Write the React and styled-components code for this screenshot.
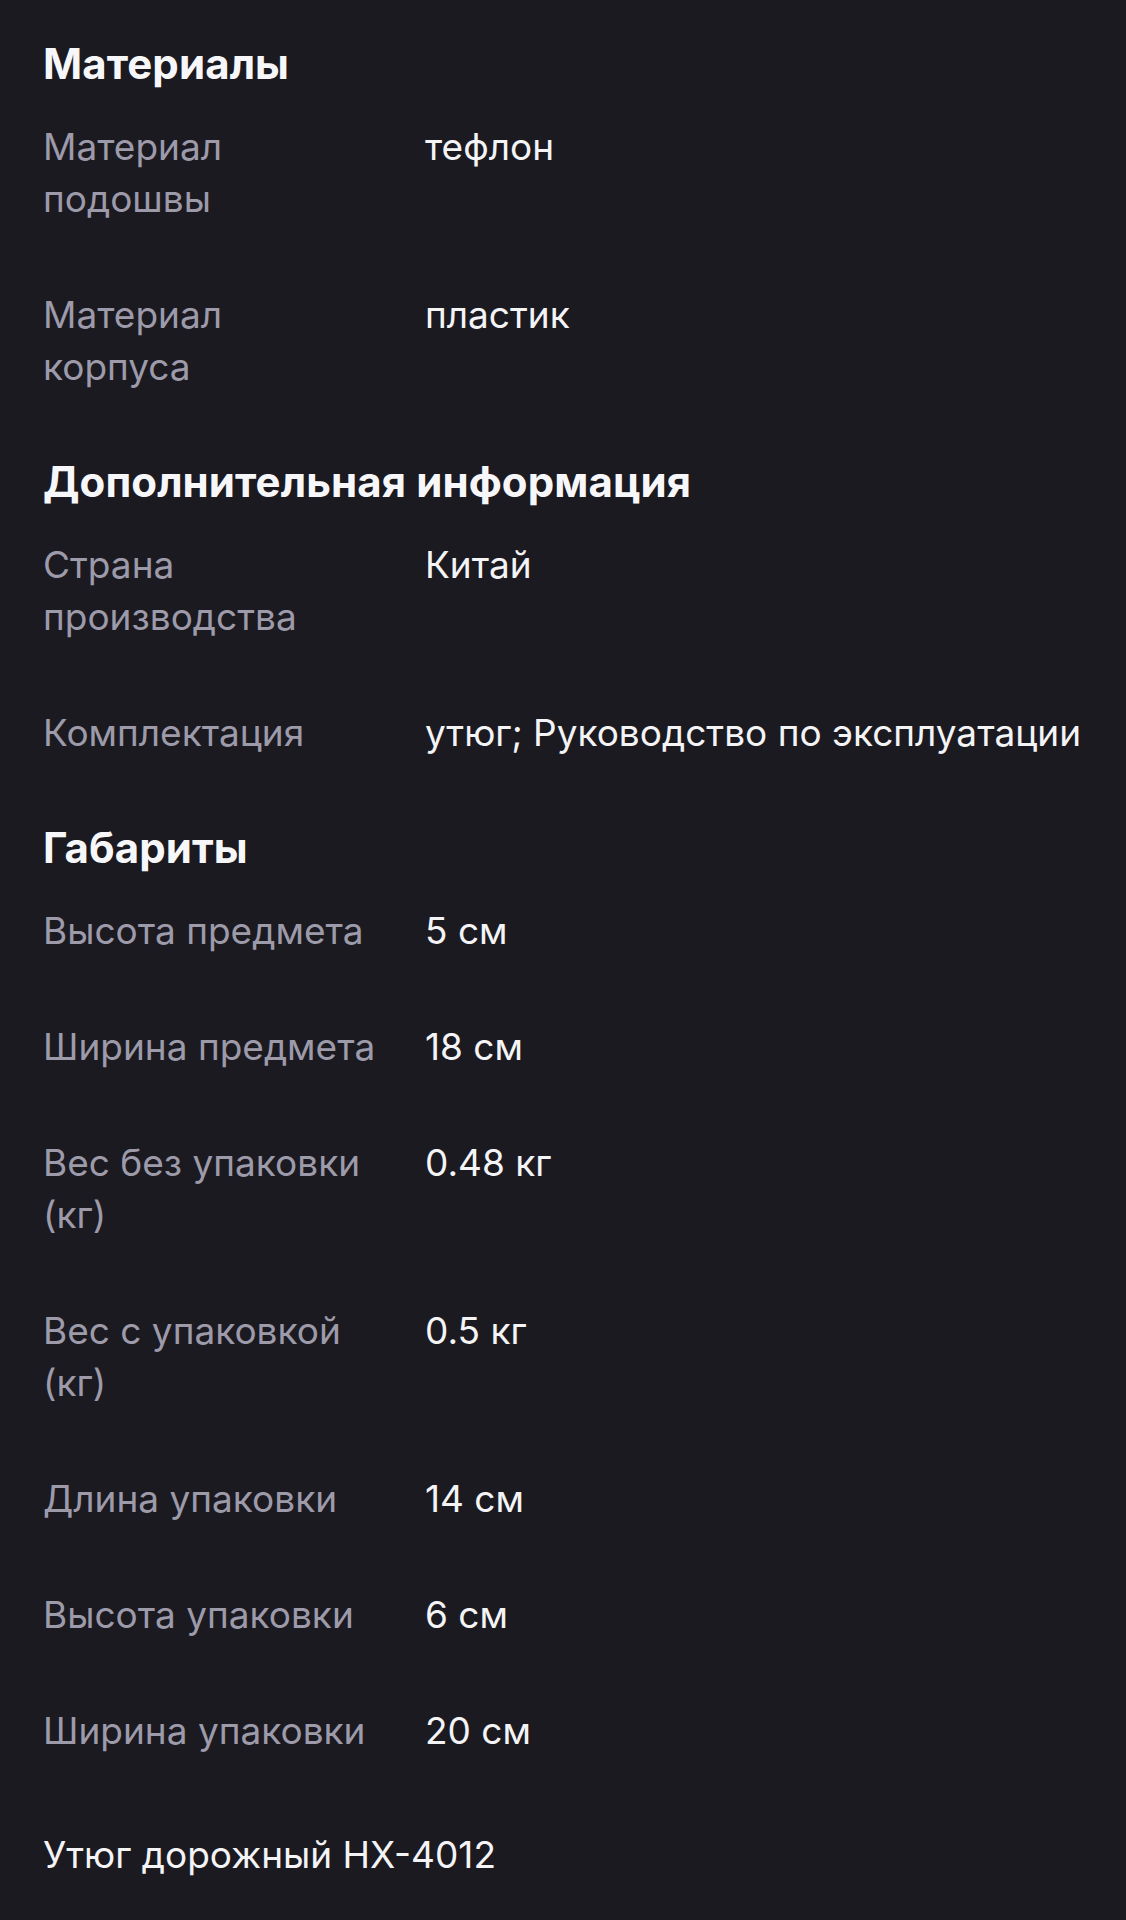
import React from "react";
import styled, { createGlobalStyle } from "styled-components";

const GlobalStyle = createGlobalStyle`
  html, body {
    margin: 0;
    padding: 0;
    background: #1b1a21;
  }
  body {
    font-family: Inter, "Noto Sans", "Liberation Sans", sans-serif;
    -webkit-font-smoothing: antialiased;
  }
`;

const Page = styled.main`
  min-height: 1920px;
  box-sizing: border-box;
  background: #1b1a21;
  padding: 38px 43px 40px;
  color: #f4f4f6;
`;

const Section = styled.section`
  display: flex;
  flex-direction: column;
`;

const Heading = styled.h2`
  margin: 0 0 31px;
  font-size: 42px;
  line-height: 52px;
  font-weight: 700;
  color: #f7f7f9;
  letter-spacing: 0.1px;
`;

const List = styled.dl`
  margin: 0 0 63px;
  display: flex;
  flex-direction: column;
  gap: 64px;
`;

const Row = styled.div`
  display: grid;
  grid-template-columns: 335px 1fr;
  column-gap: 47px;
  font-size: 37px;
  line-height: 52px;
`;

const Label = styled.dt`
  margin: 0;
  color: #9d9aaa;
`;

const Value = styled.dd`
  margin: 0;
  color: #f4f4f6;
`;

const Title = styled.p`
  margin: 9px 0 0;
  font-size: 37px;
  line-height: 52px;
  color: #f4f4f6;
`;

const sections = [
  {
    title: "Материалы",
    rows: [
      ["Материал подошвы", "тефлон"],
      ["Материал корпуса", "пластик"],
    ],
  },
  {
    title: "Дополнительная информация",
    rows: [
      ["Страна производства", "Китай"],
      ["Комплектация", "утюг; Руководство по эксплуатации"],
    ],
  },
  {
    title: "Габариты",
    rows: [
      ["Высота предмета", "5 см"],
      ["Ширина предмета", "18 см"],
      ["Вес без упаковки (кг)", "0.48 кг"],
      ["Вес с упаковкой (кг)", "0.5 кг"],
      ["Длина упаковки", "14 см"],
      ["Высота упаковки", "6 см"],
      ["Ширина упаковки", "20 см"],
    ],
  },
];

export default function App() {
  return (
    <>
      <GlobalStyle />
      <Page>
        {sections.map((s) => (
          <Section key={s.title}>
            <Heading>{s.title}</Heading>
            <List>
              {s.rows.map(([k, v]) => (
                <Row key={k}>
                  <Label>{k}</Label>
                  <Value>{v}</Value>
                </Row>
              ))}
            </List>
          </Section>
        ))}
        <Title>Утюг дорожный HX-4012</Title>
      </Page>
    </>
  );
}
